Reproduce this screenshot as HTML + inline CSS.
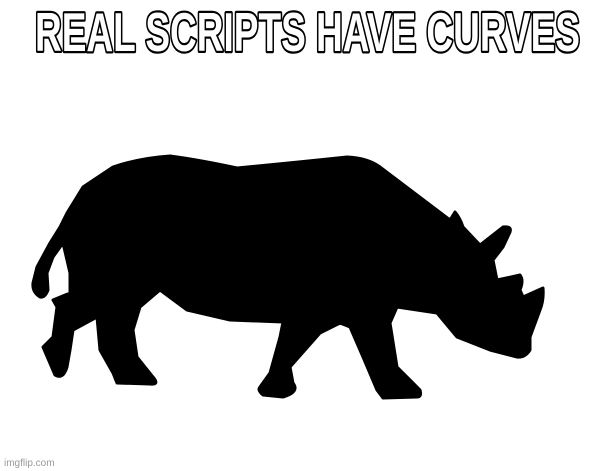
<!DOCTYPE html>
<html><head><style>
html,body{margin:0;padding:0;width:615px;height:471px;overflow:hidden;background:#fff;}
.w{position:absolute;left:4px;bottom:2px;font-family:"Liberation Sans",sans-serif;font-size:10px;color:#999;}
</style></head><body>
<svg width="615" height="471" style="position:absolute;left:0;top:0">
<path fill="#000" stroke="#000" stroke-width="3" stroke-linejoin="round" d="M113 167 Q140 158 170 156 Q200 160 237 168 Q300 162 347 157 Q368 158 380 167 L450 220 L455 212 Q460 218 463 227 L480 245 L503 227 Q512 226 510 232 L503 247 L493 260 L497 280 L520 275 Q524 280 520 290 L523 297 L543 288 Q544 300 540 310 L530 337 L530 350 Q525 358 517 357 L490 350 L457 337 L437 313 L417 310 L397 307 L390 323 L397 367 L420 390 Q422 397 417 397 L383 398 L377 390 L363 357 L350 327 L340 323 L320 333 L290 367 L293 383 Q300 392 283 397 L263 395 Q257 390 260 387 L270 373 L280 337 L283 322 L230 320 L187 310 L160 290 L140 307 L133 330 L137 357 L153 377 Q160 385 150 384 L117 383 L113 373 L100 350 L97 317 L73 330 L70 350 L67 367 Q63 380 55 375 L43 347 L53 337 L57 307 L53 300 L70 293 L70 273 L63 243 L53 257 L47 273 L48 290 Q45 298 40 297 Q32 292 33 283 L37 267 L50 243 L60 227 L67 213 L83 187 Z"/>
<text x="35" y="51" textLength="545" lengthAdjust="spacingAndGlyphs" font-family="Liberation Sans, sans-serif" font-weight="bold" font-size="55" fill="#fff" stroke="#000" stroke-width="4.5" paint-order="stroke fill" stroke-linejoin="round">REAL SCRIPTS HAVE CURVES</text>
</svg>
<div class="w">imgflip.com</div>
</body></html>
